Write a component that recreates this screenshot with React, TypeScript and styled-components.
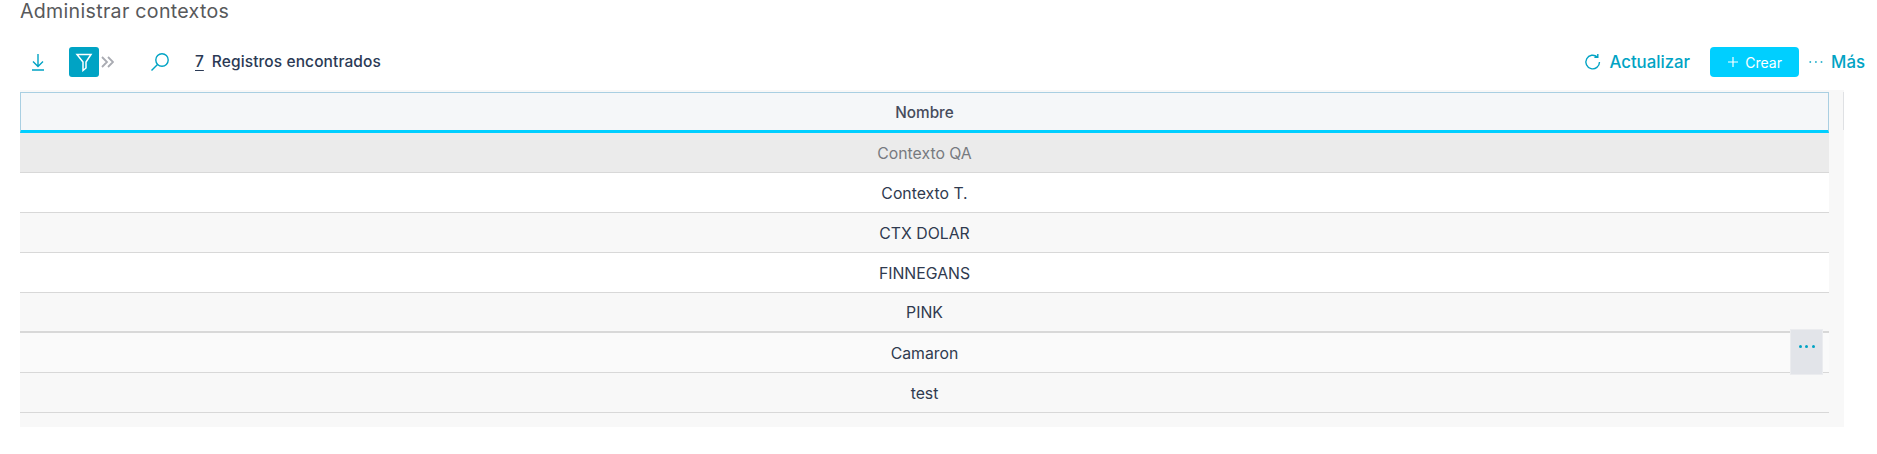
import React from 'react';
import styled, { createGlobalStyle } from 'styled-components';

const GlobalStyle = createGlobalStyle`
  html, body {
    margin: 0;
    padding: 0;
    background: #fff;
    font-family: Inter, "Open Sans", sans-serif;
  }
`;

const Page = styled.div`
  width: 1877px;
  height: 454px;
  overflow: hidden;
  box-sizing: border-box;
  padding: 0 0 0 20px;
`;

const PageTitle = styled.h1`
  margin: 0;
  height: 22px;
  font-size: 19.6px;
  line-height: 22px;
  font-weight: 400;
  color: #58595b;
  letter-spacing: 0.3px;
`;

const Toolbar = styled.div`
  display: flex;
  align-items: center;
  height: 30px;
  margin-top: 25px;
  padding-right: 12px;
`;

const ToolbarLeft = styled.div`
  display: flex;
  align-items: center;
  flex: 1;
`;

const ToolIcon = styled.svg`
  display: block;
  fill: none;
  stroke: #00a3c4;
  stroke-width: 1.4;
`;

const DownloadSlot = styled.span`
  display: flex;
  width: 49px;
  padding-left: 10px;
  box-sizing: border-box;
`;

const FilterButton = styled.span`
  display: flex;
  align-items: center;
  justify-content: center;
  width: 30px;
  height: 30px;
  border-radius: 3px;
  background: #00a3c4;
`;

const Chevrons = styled.svg`
  display: block;
  margin-left: 2px;
  fill: none;
  stroke: #a9abb2;
  stroke-width: 1.8;
`;

const SearchSlot = styled.span`
  display: flex;
  margin-left: 36px;
`;

const Count = styled.span`
  margin-left: 25px;
  padding-bottom: 2px;
  font-size: 15.5px;
  font-weight: 500;
  color: #2b3a55;
  text-decoration: underline;
  text-underline-offset: 3px;
`;

const CountLabel = styled.span`
  margin-left: 8px;
  padding-bottom: 2px;
  font-size: 15.5px;
  font-weight: 500;
  color: #2b3a55;
  letter-spacing: 0.1px;
`;

const LinkAction = styled.span`
  display: flex;
  align-items: center;
  gap: 7px;
  font-size: 16.8px;
  font-weight: 500;
  color: #00a3c4;
`;

const CreateButton = styled.span`
  display: flex;
  align-items: center;
  justify-content: center;
  gap: 6px;
  width: 89px;
  height: 30px;
  margin: 0 10px 0 20px;
  border-radius: 4px;
  background: #00cfff;
  color: #fff;
  font-size: 14px;
  font-weight: 400;
`;

const GridPanel = styled.div`
  display: flex;
  width: 1824px;
  height: 337px;
  margin-top: 13px;
  padding-top: 2px;
  box-sizing: border-box;
  position: relative;
  background: #f8f8f8;
`;

const GridBody = styled.div`
  width: 1809px;
`;

const ScrollGutter = styled.div`
  flex: 1;
  height: 38px;
  border-right: 1px solid #dfe1e4;
`;

const HeaderRow = styled.div`
  display: flex;
  align-items: center;
  justify-content: center;
  box-sizing: border-box;
  height: 41px;
  padding-top: 2px;
  background: #f5f7f9;
  border: 1px solid #a9cfe2;
  border-bottom: 3px solid #00cfff;
  font-size: 15.3px;
  font-weight: 500;
  color: #464c5c;
`;

const Row = styled.div<{ $bg: string; $selected?: boolean; $thick?: boolean }>`
  display: flex;
  align-items: center;
  justify-content: center;
  box-sizing: border-box;
  height: 40px;
  padding-top: 1px;
  background: ${({ $bg }) => $bg};
  border-bottom: ${({ $thick }) => ($thick ? 2 : 1)}px solid #d8d8d8;
  font-size: 15.8px;
  color: ${({ $selected }) => ($selected ? '#777a7f' : '#2f3a4f')};
`;

const RowMenu = styled.div`
  position: absolute;
  left: 1770px;
  top: 239px;
  display: flex;
  align-items: flex-start;
  justify-content: center;
  gap: 3.5px;
  box-sizing: border-box;
  width: 33px;
  height: 46px;
  padding-top: 15px;
  background: #e2e4e9;
  border: 1px solid #ebecef;
`;

const Dot = styled.i`
  width: 3px;
  height: 3px;
  border-radius: 50%;
  background: #00a3c4;
`;

const rows = [
  { name: 'Contexto QA', bg: '#ebebeb', selected: true },
  { name: 'Contexto T.', bg: '#ffffff' },
  { name: 'CTX DOLAR', bg: '#f8f8f8' },
  { name: 'FINNEGANS', bg: '#ffffff' },
  { name: 'PINK', bg: '#f8f8f8', thick: true },
  { name: 'Camaron', bg: '#fafafa' },
  { name: 'test', bg: '#f8f8f8' },
];

export default function App() {
  return (
    <Page>
      <GlobalStyle />
      <PageTitle>Administrar contextos</PageTitle>
      <Toolbar>
        <ToolbarLeft>
          <DownloadSlot>
            <ToolIcon width="16" height="20" viewBox="0 0 16 20">
              <path d="M8 2v12M3 9.5 8 14.5l5-5M2 18h12" />
            </ToolIcon>
          </DownloadSlot>
          <FilterButton>
            <svg width="18" height="20" viewBox="0 0 18 20" fill="none" stroke="#fff" strokeWidth="1.5">
              <path d="M2 2.5h14L11 10v6l-3 2.5V10z" />
            </svg>
          </FilterButton>
          <Chevrons width="13" height="12" viewBox="0 0 13 12">
            <path d="M1 1l5 5-5 5M7 1l5 5-5 5" />
          </Chevrons>
          <SearchSlot>
            <ToolIcon width="20" height="20" viewBox="0 0 20 20">
              <circle cx="12" cy="8" r="6.2" />
              <path d="M7.5 12.5 1.5 18.5" />
            </ToolIcon>
          </SearchSlot>
          <Count>7</Count>
          <CountLabel>Registros encontrados</CountLabel>
        </ToolbarLeft>
        <LinkAction>
          <ToolIcon width="18" height="18" viewBox="0 0 18 18">
            <path d="M15.5 9a6.8 6.8 0 1 1-2.2-5M13.8 1v3.4h-3.4" />
          </ToolIcon>
          Actualizar
        </LinkAction>
        <CreateButton>
          <svg width="12" height="12" viewBox="0 0 12 12" stroke="#fff" strokeWidth="1.2">
            <path d="M6 1v10M1 6h10" />
          </svg>
          Crear
        </CreateButton>
        <LinkAction>
          <ToolIcon width="15" height="4" viewBox="0 0 15 4" strokeDasharray="1.6 4">
            <path d="M0.5 2h14" />
          </ToolIcon>
          Más
        </LinkAction>
      </Toolbar>
      <GridPanel>
        <GridBody>
          <HeaderRow>Nombre</HeaderRow>
          {rows.map((r) => (
            <Row key={r.name} $bg={r.bg} $selected={r.selected} $thick={r.thick}>
              {r.name}
            </Row>
          ))}
        </GridBody>
        <ScrollGutter />
        <RowMenu>
          <Dot />
          <Dot />
          <Dot />
        </RowMenu>
      </GridPanel>
    </Page>
  );
}
